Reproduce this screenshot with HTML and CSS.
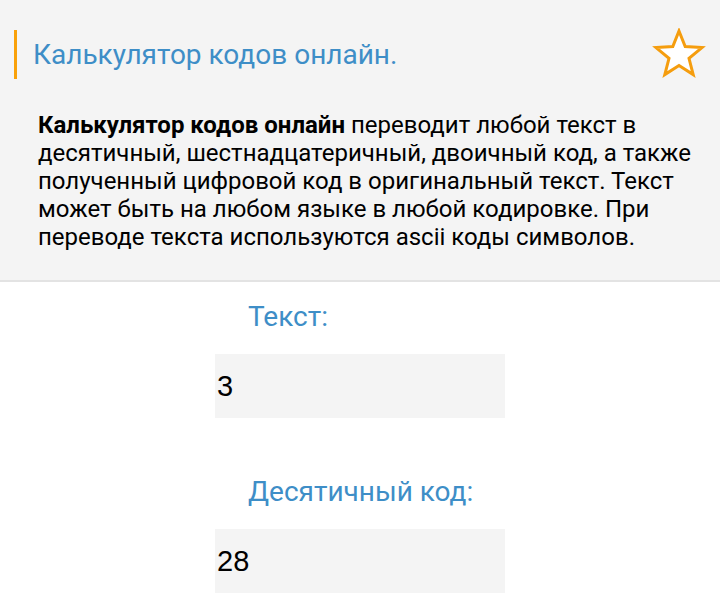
FILE: index.html
```html
<!DOCTYPE html>
<html lang="ru">
<head>
<meta charset="utf-8">
<title>Калькулятор кодов онлайн</title>
<link rel="stylesheet" href="styles.css">
</head>
<body>
<header class="intro">
  <div class="title-row">
    <h1 class="title">Калькулятор кодов онлайн.</h1>
    <svg class="star" viewBox="0 0 54 50" width="54" height="50" aria-hidden="true">
      <polygon points="27,3 33.2,18.6 50,19.6 37,30.3 41.2,46.6 27,37.6 12.8,46.6 17,30.3 4,19.6 20.8,18.6" fill="#ffffff" stroke="#f59d0e" stroke-width="3" stroke-linejoin="miter"/>
    </svg>
  </div>
  <p class="desc"><b>Калькулятор кодов онлайн</b> переводит любой текст в десятичный, шестнадцатеричный, двоичный код, а также полученный цифровой код в оригинальный текст. Текст может быть на любом языке в любой кодировке. При переводе текста используются ascii коды символов.</p>
</header>
<main class="form">
  <div class="field">
    <label class="label" for="t">Текст:</label>
    <input class="input" id="t" type="text" value="3">
  </div>
  <div class="field">
    <label class="label" for="d">Десятичный код:</label>
    <input class="input" id="d" type="text" value="28">
  </div>
</main>
</body>
</html>
```
FILE: styles.css
```css
html, body {
  margin: 0;
  padding: 0;
  background: #ffffff;
}
body {
  font-family: Roboto, "Noto Sans", sans-serif;
  color: #000;
}
.intro {
  box-sizing: border-box;
  height: 282px;
  background: #f4f4f4;
  border-bottom: 2px solid #e3e3e3;
  padding: 30px 14px 0 14px;
}
.title-row {
  display: flex;
  align-items: flex-start;
  justify-content: space-between;
}
.title {
  margin: 0;
  border-left: 3px solid #f9a10a;
  padding: 8px 0 7px 16px;
  font-size: 28px;
  line-height: 34px;
  font-weight: 400;
  color: #3e8ec7;
}
.star {
  display: block;
  margin-top: -2px;
}
.desc {
  margin: 32px 0 0 24px;
  font-size: 24px;
  line-height: 28px;
  width: 658px;
}
.desc b {
  font-weight: 700;
}
.form {
  width: 290px;
  margin: 0 auto;
  padding-top: 18px;
}
.field {
  display: flex;
  flex-direction: column;
}
.field + .field {
  margin-top: 57px;
}
.label {
  font-size: 28px;
  line-height: 34px;
  color: #3e8ec7;
  padding-left: 33px;
  margin-bottom: 20px;
}
.input {
  box-sizing: border-box;
  height: 64px;
  width: 290px;
  border: none;
  background: #f4f4f4;
  padding: 0 2px;
  font-family: "Liberation Sans", Arial, sans-serif;
  font-size: 29px;
  color: #000;
  outline: none;
}
```
